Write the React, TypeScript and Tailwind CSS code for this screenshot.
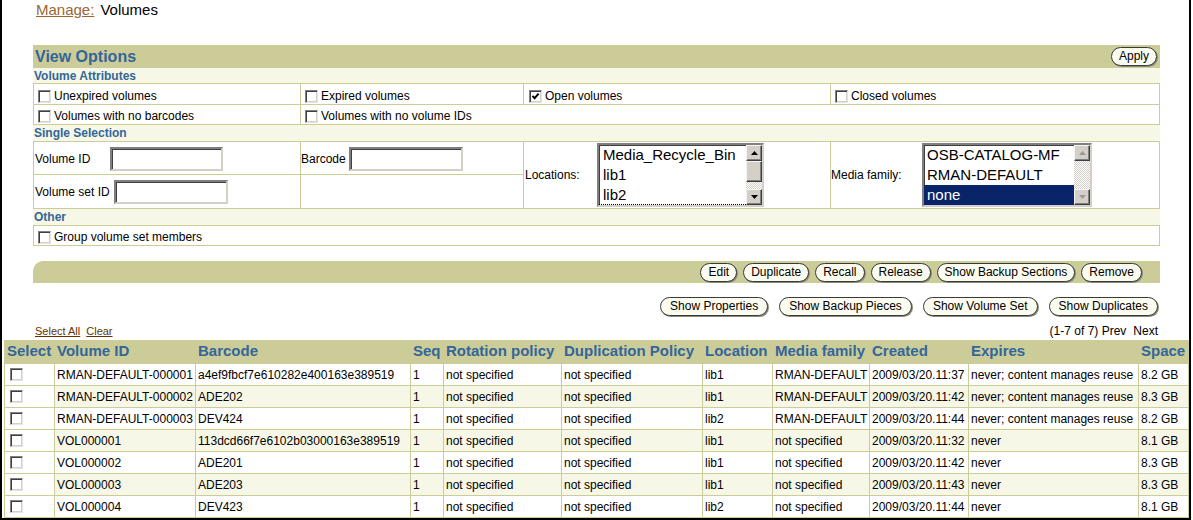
import React from 'react';

function Cb({ checked = false }: { checked?: boolean }) {
  return (
    <span className="inline-flex items-center justify-center w-[13px] h-[13px] shrink-0 bg-white border border-t-[#808080] border-l-[#808080] border-r-[#e4e4e4] border-b-[#e4e4e4] shadow-[inset_1px_1px_0_#404040,inset_-1px_-1px_0_#d4d0c8]">
      {checked && (
        <svg width="9" height="9" viewBox="0 0 9 9">
          <path d="M1.5 3.8 L3.6 6.2 L7.6 1.6" stroke="#000" strokeWidth="1.9" fill="none" />
        </svg>
      )}
    </span>
  );
}

function Btn({ children, wide = false }: { children: React.ReactNode; wide?: boolean }) {
  return (
    <span
      className={
        'h-[19px] rounded-full border border-[#3a3a3a] bg-[#fbfbf0] text-[12px] leading-[17px] flex items-center shadow-[1px_1px_0_#8a8a7a] whitespace-nowrap text-black ' +
        (wide ? 'px-[9px]' : 'px-[7px]')
      }
    >
      {children}
    </span>
  );
}

function Input({ className }: { className: string }) {
  return (
    <div
      className={
        'h-[24px] shrink-0 bg-white border-2 border-t-[#808080] border-l-[#808080] border-r-[#d4d0c8] border-b-[#d4d0c8] shadow-[inset_1px_1px_0_#404040] ' +
        className
      }
    />
  );
}

function SbBtn({ up, disabled = false }: { up: boolean; disabled?: boolean }) {
  return (
    <div className="w-[16px] h-[16px] shrink-0 bg-[#d4d0c8] border border-t-[#f4f4f4] border-l-[#f4f4f4] border-r-[#404040] border-b-[#404040] shadow-[inset_-1px_-1px_0_#808080] flex items-center justify-center">
      <svg width="7" height="4" viewBox="0 0 7 4">
        <path d={up ? 'M0 4 L3.5 0 L7 4Z' : 'M0 0 L3.5 4 L7 0Z'} fill={disabled ? '#9a9a9a' : '#000'} />
      </svg>
    </div>
  );
}

const Track = ({ className }: { className: string }) => (
  <div
    className={
      'bg-[image:repeating-conic-gradient(#d4d0c8_0%_25%,#ffffff_0%_50%)] bg-[length:2px_2px] ' + className
    }
  />
);

const listBox =
  'h-[64px] shrink-0 flex bg-white border-2 border-t-[#808080] border-l-[#808080] border-r-[#d4d0c8] border-b-[#d4d0c8] shadow-[inset_1px_1px_0_#404040]';

function Sub({ children, className }: { children: React.ReactNode; className: string }) {
  return (
    <div className={'bg-[#f7f7e7] flex items-center text-[12px] font-bold text-[#336699] pl-[1px] ' + className}>
      {children}
    </div>
  );
}

const rows: string[][] = [
  ['RMAN-DEFAULT-000001', 'a4ef9fbcf7e610282e400163e389519', '1', 'not specified', 'not specified', 'lib1', 'RMAN-DEFAULT', '2009/03/20.11:37', 'never; content manages reuse', '8.2 GB'],
  ['RMAN-DEFAULT-000002', 'ADE202', '1', 'not specified', 'not specified', 'lib1', 'RMAN-DEFAULT', '2009/03/20.11:42', 'never; content manages reuse', '8.3 GB'],
  ['RMAN-DEFAULT-000003', 'DEV424', '1', 'not specified', 'not specified', 'lib2', 'RMAN-DEFAULT', '2009/03/20.11:44', 'never; content manages reuse', '8.2 GB'],
  ['VOL000001', '113dcd66f7e6102b03000163e389519', '1', 'not specified', 'not specified', 'lib1', 'not specified', '2009/03/20.11:32', 'never', '8.1 GB'],
  ['VOL000002', 'ADE201', '1', 'not specified', 'not specified', 'lib1', 'not specified', '2009/03/20.11:42', 'never', '8.3 GB'],
  ['VOL000003', 'ADE203', '1', 'not specified', 'not specified', 'lib1', 'not specified', '2009/03/20.11:43', 'never', '8.3 GB'],
  ['VOL000004', 'DEV423', '1', 'not specified', 'not specified', 'lib2', 'not specified', '2009/03/20.11:44', 'never', '8.1 GB'],
];

const headers = ['Select', 'Volume ID', 'Barcode', 'Seq', 'Rotation policy', 'Duplication Policy', 'Location', 'Media family', 'Created', 'Expires', 'Space'];

export default function App() {
  return (
    <div className="w-[1193px] h-[520px] bg-white overflow-hidden font-['Liberation_Sans',Arial,sans-serif] text-black">
      <div className="w-[1191px] h-[520px] border-l-2 border-r-2 border-b-2 border-black flex flex-col">
        {/* Title */}
        <div className="h-[45px] shrink-0 pl-[34px] pt-[1px] text-[15px] leading-[18px]">
          <span className="text-[#996633] underline">Manage:</span>
          <span className="ml-[6px]">Volumes</span>
        </div>

        {/* View Options panel */}
        <div className="ml-[31px] w-[1127px] shrink-0">
          <div className="h-[23px] bg-[#cccc99] flex items-center justify-between pl-[2px] pr-[3px]">
            <span className="text-[16px] font-bold text-[#336699] leading-none">View Options</span>
            <Btn>Apply</Btn>
          </div>
          <Sub className="h-[15px]">Volume Attributes</Sub>
          <div className="h-[21px] flex border-t border-l border-r border-[#cccc99] text-[12px]">
            <div className="w-[267px] border-r border-[#cccc99] flex items-center gap-[3px] pl-[4px] pt-[4px]">
              <Cb />
              Unexpired volumes
            </div>
            <div className="w-[223px] border-r border-[#cccc99] flex items-center gap-[3px] pl-[4px] pt-[4px]">
              <Cb />
              Expired volumes
            </div>
            <div className="w-[307px] border-r border-[#cccc99] flex items-center gap-[3px] pl-[5px] pt-[4px]">
              <Cb checked />
              Open volumes
            </div>
            <div className="flex-1 flex items-center gap-[3px] pl-[4px] pt-[4px]">
              <Cb />
              Closed volumes
            </div>
          </div>
          <div className="h-[21px] flex border border-[#cccc99] text-[12px]">
            <div className="w-[267px] border-r border-[#cccc99] flex items-center gap-[3px] pl-[4px] pt-[3px]">
              <Cb />
              Volumes with no barcodes
            </div>
            <div className="flex-1 flex items-center gap-[3px] pl-[4px] pt-[3px]">
              <Cb />
              Volumes with no volume IDs
            </div>
          </div>
          <Sub className="h-[16px]">Single Selection</Sub>
          <div className="h-[67px] flex border-t border-l border-r border-[#cccc99] text-[12px]">
            <div className="w-[267px] border-r border-[#cccc99] flex flex-col">
              <div className="h-[33px] border-b border-[#cccc99] flex items-center pl-[1px] pt-[1px]">
                <span className="w-[75px] shrink-0">Volume ID</span>
                <Input className="w-[113px]" />
              </div>
              <div className="flex-1 flex items-center pl-[1px]">
                <span className="w-[79px] shrink-0 whitespace-nowrap">Volume set ID</span>
                <Input className="w-[114px]" />
              </div>
            </div>
            <div className="w-[223px] border-r border-[#cccc99] flex flex-col">
              <div className="h-[33px] border-b border-[#cccc99] flex items-center pt-[1px]">
                <span className="w-[48px] shrink-0">Barcode</span>
                <Input className="w-[114px]" />
              </div>
              <div className="flex-1" />
            </div>
            <div className="w-[307px] border-r border-[#cccc99] flex items-center pl-[1px]">
              <span className="w-[72px] shrink-0">Locations:</span>
              <div className={listBox + ' w-[167px]'}>
                <div className="flex-1 flex flex-col text-[15px] leading-[20px] overflow-hidden whitespace-nowrap">
                  <div className="h-[20px] pl-[4px]">Media_Recycle_Bin</div>
                  <div className="h-[20px] pl-[4px]">lib1</div>
                  <div className="h-[20px] pl-[4px] border-b border-dotted border-black">lib2</div>
                </div>
                <div className="w-[16px] flex flex-col">
                  <SbBtn up />
                  <div className="h-[21px] shrink-0 bg-[#d4d0c8] border border-t-[#f4f4f4] border-l-[#f4f4f4] border-r-[#404040] border-b-[#404040] shadow-[inset_-1px_-1px_0_#808080]" />
                  <Track className="flex-1" />
                  <SbBtn up={false} />
                </div>
              </div>
            </div>
            <div className="flex-1 flex items-center">
              <span className="w-[91px] shrink-0">Media family:</span>
              <div className={listBox + ' w-[170px]'}>
                <div className="flex-1 flex flex-col text-[15px] leading-[20px] overflow-hidden whitespace-nowrap">
                  <div className="h-[20px] pl-[3px]">OSB-CATALOG-MF</div>
                  <div className="h-[20px] pl-[3px]">RMAN-DEFAULT</div>
                  <div className="h-[20px] pl-[3px] bg-[#0a246a] text-white">none</div>
                </div>
                <div className="w-[16px] flex flex-col">
                  <SbBtn up disabled />
                  <Track className="flex-1" />
                  <SbBtn up={false} disabled />
                </div>
              </div>
            </div>
          </div>
          <Sub className="h-[17px] border-t border-[#cccc99]">Other</Sub>
          <div className="h-[21px] flex items-center gap-[3px] pl-[4px] pt-[3px] border border-[#cccc99] text-[12px]">
            <Cb />
            Group volume set members
          </div>
        </div>

        {/* Action bar */}
        <div className="ml-[31px] mt-[15px] w-[1127px] h-[22px] shrink-0 bg-[#cccc99] rounded-tl-[10px] flex items-center justify-end gap-[6px] pr-[18px]">
          <Btn>Edit</Btn>
          <Btn>Duplicate</Btn>
          <Btn>Recall</Btn>
          <Btn>Release</Btn>
          <Btn>Show Backup Sections</Btn>
          <Btn>Remove</Btn>
        </div>

        <div className="ml-[31px] mt-[14px] w-[1127px] h-[19px] shrink-0 flex items-center justify-end gap-[11px] pr-[2px]">
          <Btn wide>Show Properties</Btn>
          <Btn wide>Show Backup Pieces</Btn>
          <Btn wide>Show Volume Set</Btn>
          <Btn wide>Show Duplicates</Btn>
        </div>

        <div className="h-[24px] shrink-0 flex items-end justify-between pb-[2px]">
          <div className="ml-[33px] flex gap-[6px] text-[11px] leading-[13px] text-[#663300]">
            <span className="underline">Select All</span>
            <span className="underline">Clear</span>
          </div>
          <div className="mr-[31px] text-[12px] leading-[14px] flex gap-[7px]">
            <span>(1-7 of 7) Prev</span>
            <span>Next</span>
          </div>
        </div>

        {/* Results table */}
        <div className="ml-[2px] w-[1185px] shrink-0 grid grid-cols-[50px_141px_215px_33px_118px_141px_70px_97px_99px_170px_51px] border-b border-[#cccc99]">
          {headers.map((h) => (
            <div
              key={h}
              className="h-[23px] bg-[#cccc99] flex items-center pl-[3px] text-[15px] font-bold text-[#336699] whitespace-nowrap"
            >
              {h}
            </div>
          ))}
          {rows.map((r, i) => {
            const band = i % 2 === 1 ? 'bg-[#f7f7e7]' : 'bg-white';
            return (
              <React.Fragment key={i}>
                <div className="h-[22px] border-t border-l border-[#cccc99] bg-white flex items-center pl-[5px]">
                  <Cb />
                </div>
                {r.map((c, j) => (
                  <div
                    key={j}
                    className={
                      'h-[22px] border-t border-l border-[#cccc99] flex items-center pl-[2px] text-[12px] whitespace-nowrap overflow-hidden ' +
                      band +
                      (j === r.length - 1 ? ' border-r' : '')
                    }
                  >
                    {c}
                  </div>
                ))}
              </React.Fragment>
            );
          })}
        </div>
      </div>
    </div>
  );
}
